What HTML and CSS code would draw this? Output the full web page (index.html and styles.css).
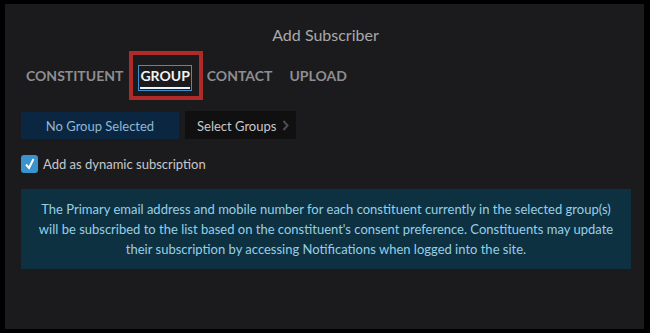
FILE: index.html
```html
<html>
<head>
<meta charset="UTF-8">
<title>Add Subscriber</title>
<link rel="stylesheet" href="styles.css">
</head>
<body>
  <div class="panel">
    <div class="title">Add Subscriber</div>

    <div class="tabs">
      <span class="tab"><span class="tab-label">CONSTITUENT</span></span>
      <span class="tab active"><span class="tab-label">GROUP</span></span>
      <span class="tab"><span class="tab-label">CONTACT</span></span>
      <span class="tab"><span class="tab-label">UPLOAD</span></span>
      <div class="callout"></div>
    </div>

    <div class="group-row">
      <div class="group-status">No Group Selected</div>
      <div class="group-select">
        Select Groups
        <svg class="chevron" width="7" height="11" viewBox="0 0 7 11">
          <polyline points="1.5,1 5.5,5.5 1.5,10" fill="none" stroke="#4e4e50" stroke-width="2"/>
        </svg>
      </div>
    </div>

    <label class="check-row">
      <span class="checkbox">
        <svg width="18" height="18" viewBox="0 0 18 18">
          <polyline points="5,9.5 8,13 12.5,4" fill="none" stroke="#ffffff" stroke-width="2"/>
        </svg>
      </span>
      Add as dynamic subscription
    </label>

    <div class="info">
      The Primary email address and mobile number for each constituent currently in the selected group(s)
      will be subscribed to the list based on the constituent's consent preference. Constituents may update
      their subscription by accessing Notifications when logged into the site.
    </div>
  </div>
</body>
</html>
```

FILE: styles.css
```css
* {
  box-sizing: border-box;
}

body {
  margin: 0;
  background: #000000;
  font-family: Lato, "Open Sans", sans-serif;
}

.panel {
  margin: 4px 6px 0 5px;
  height: 325px;
  background: #1b1b1d;
  padding: 21px 13px 0 16px;
}

.title {
  text-align: center;
  color: #a9a9ab;
  font-size: 16px;
  line-height: 20px;
  padding-right: 1px;
}

/* tab strip */
.tabs {
  position: relative;
  display: flex;
  gap: 13px;
  margin: 20px 0 0 3px;
}
.tab {
  display: block;
  border: 1px solid transparent;
  padding: 1px 1px 1px;
  font-size: 14px;
  font-weight: bold;
  color: #8e8e90;
  line-height: 17px;
}
.tab-label {
  display: block;
  padding-bottom: 3px;
  border-bottom: 2px solid transparent;
}
.tab.active {
  border-color: #3a8fd0;
  color: #f2f2f2;
}
.tab.active .tab-label {
  border-bottom-color: #f2f2f2;
}
.callout {
  position: absolute;
  left: 105px;
  top: -14px;
  width: 74px;
  height: 49px;
  border: 4px solid #b02a2a;
}

/* group picker */
.group-row {
  display: flex;
  align-items: flex-end;
  gap: 6px;
  margin-top: 20px;
}
.group-status {
  width: 158px;
  height: 27px;
  line-height: 28px;
  text-align: center;
  background: #0b2640;
  color: #8fb8d6;
  font-size: 13px;
}
.group-select {
  display: flex;
  align-items: center;
  gap: 6px;
  width: 111px;
  height: 28px;
  padding: 1px 0 0 12px;
  background: #101011;
  color: #c8c8ca;
  font-size: 13px;
}

.check-row {
  display: flex;
  align-items: center;
  gap: 5px;
  margin-top: 16px;
  height: 18px;
  color: #c8c8ca;
  font-size: 13px;
}
.checkbox {
  width: 17px;
  height: 18px;
  border-radius: 3px;
  background: #3a93cc;
}
.checkbox svg {
  display: block;
}

.info {
  margin-top: 16px;
  padding: 10px 16px;
  background: #0e3142;
  color: #96cfe6;
  font-size: 13px;
  line-height: 20px;
  text-align: center;
}
```
